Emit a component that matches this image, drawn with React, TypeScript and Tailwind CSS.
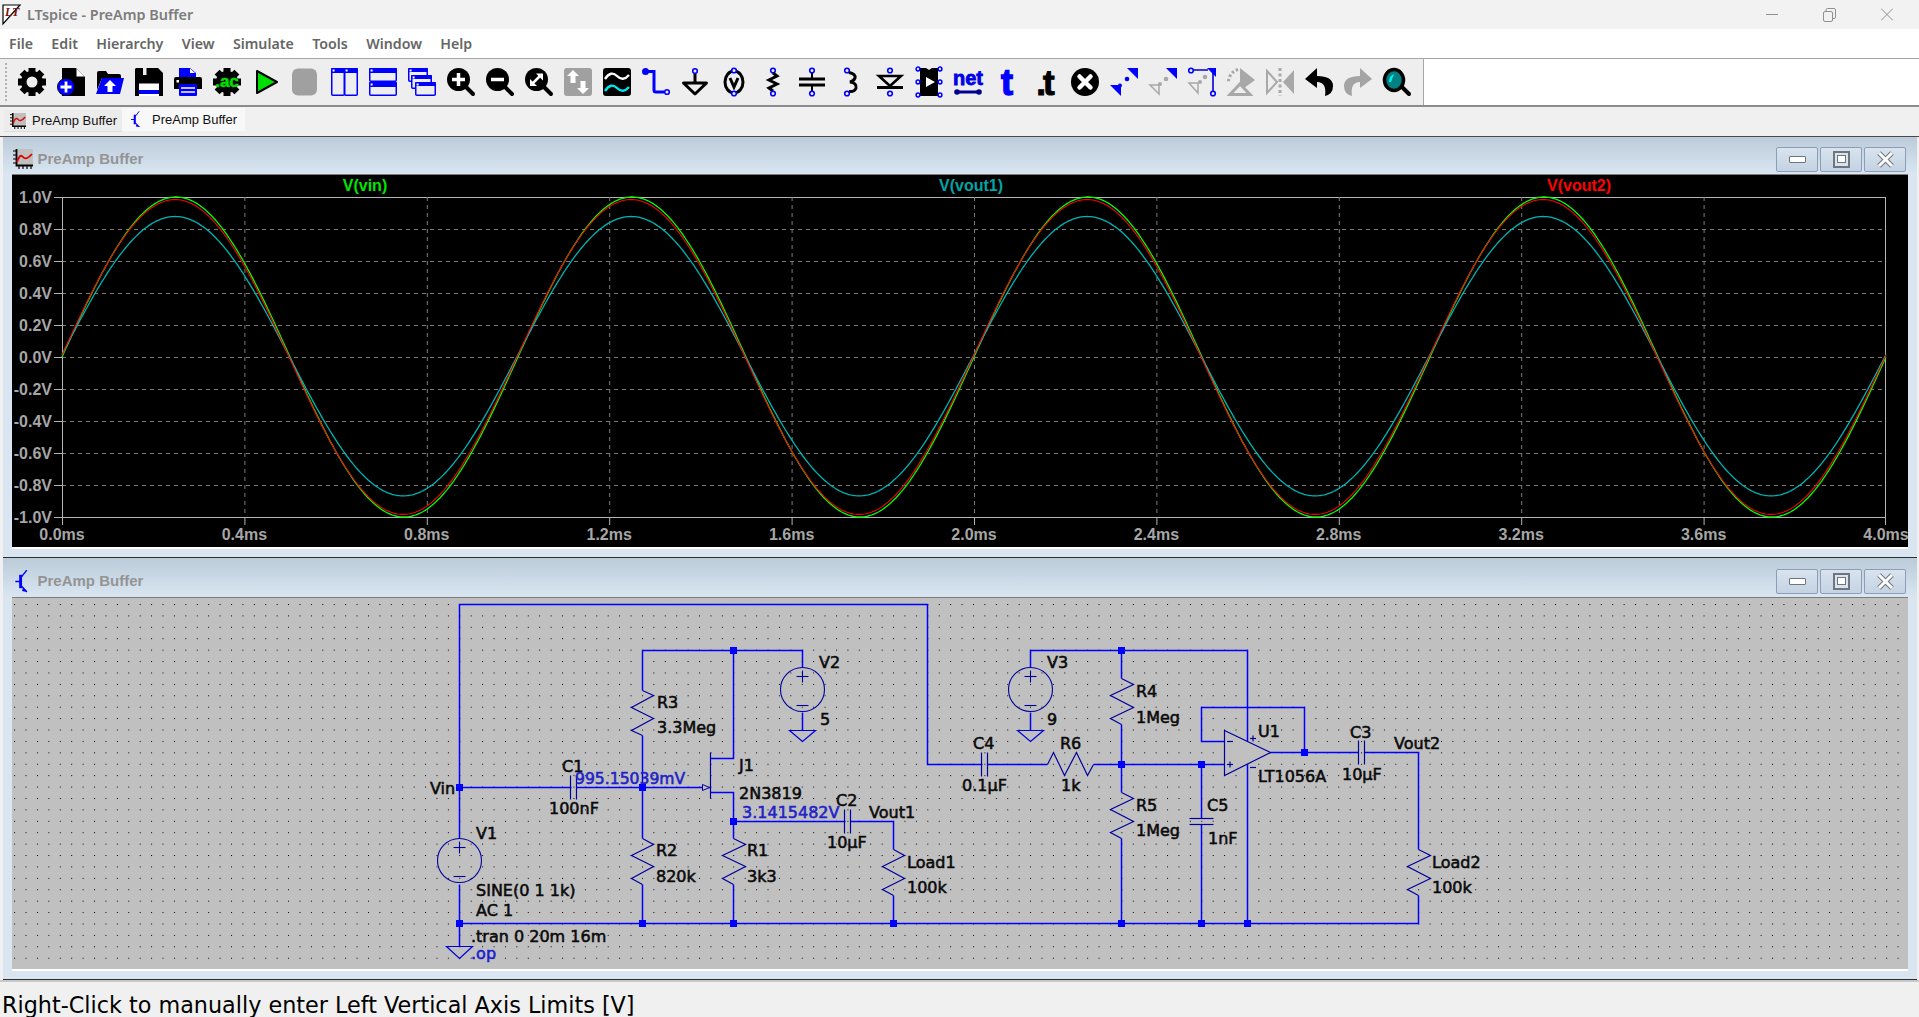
import type { ReactNode } from 'react'

const menus = ['File', 'Edit', 'Hierarchy', 'View', 'Simulate', 'Tools', 'Window', 'Help']

// schematic grid, one step is 16 LTspice units on screen
const gx = (n: number) => Math.round(459.3 + 11.415 * n) + 0.5
const gy = (n: number) => Math.round(604 + 11.41 * n) + 0.5
const px = (p: number[][]) => p.map(([c, r]) => `${gx(c)},${gy(r)}`).join(' ')

const wires = [
  [[0, 16], [9.75, 16]],
  [[10.25, 16], [22, 16]],
  [[0, 20.5], [0, 0], [41, 0], [41, 14], [45.75, 14]],
  [[46.25, 14], [51.5, 14]],
  [[55.5, 14], [67, 14]],
  [[16, 4], [16, 7.5]],
  [[16, 11.5], [16, 20.5]],
  [[16, 24.5], [16, 28]],
  [[16, 4], [30, 4], [30, 5.5]],
  [[24, 4], [24, 13.5], [22, 13.5]],
  [[22, 16.5], [24, 16.5], [24, 20.5]],
  [[24, 24.5], [24, 28]],
  [[24, 19], [33.75, 19]],
  [[34.25, 19], [38, 19], [38, 21.5]],
  [[38, 25.5], [38, 28]],
  [[0, 24.5], [0, 30]],
  [[0, 28], [84, 28], [84, 25.5]],
  [[84, 21.5], [84, 13], [79.25, 13]],
  [[78.75, 13], [71, 13]],
  [[30, 9.5], [30, 11]],
  [[50, 9.5], [50, 11]],
  [[50, 5.5], [50, 4], [69, 4], [69, 12]],
  [[69, 14], [69, 28]],
  [[58, 4], [58, 6.5]],
  [[58, 10.5], [58, 16.5]],
  [[58, 20.5], [58, 28]],
  [[65, 14], [65, 18.75]],
  [[65, 19.25], [65, 28]],
  [[67, 12], [65, 12], [65, 9], [74, 9], [74, 13]],
]

const nodes = [
  [0, 16], [16, 16], [24, 4], [24, 19], [0, 28], [16, 28], [24, 28], [38, 28],
  [58, 28], [65, 28], [69, 28], [58, 4], [58, 14], [65, 14], [74, 13],
]

const resistors = [
  [16, 7.5], [16, 20.5], [24, 20.5], [38, 21.5], [84, 21.5], [58, 6.5], [58, 16.5],
]

const sources = [
  [30, 7.47], [50, 7.47], [0, 22.47],
]

const grounds = [
  [30, 11], [50, 11], [0, 30],
]

// x, baseline, text
const labels: [number, number, string][] = [
  [819, 668, 'V2'], [820, 725, '5'], [657, 708, 'R3'], [657, 733, '3.3Meg'], [739, 771, 'J1'],
  [562, 772, 'C1'], [430, 794, 'Vin'], [549, 814, '100nF'], [739, 799, '2N3819'], [836, 806, 'C2'],
  [869, 818, 'Vout1'], [827, 848, '10µF'], [476, 839, 'V1'], [656, 856, 'R2'], [656, 882, '820k'],
  [747, 856, 'R1'], [747, 882, '3k3'], [907, 868, 'Load1'], [907, 893, '100k'],
  [476, 896, 'SINE(0 1 1k)'], [476, 916, 'AC 1'], [471, 942, '.tran 0 20m 16m'],
  [1047, 668, 'V3'], [1047, 725, '9'], [1136, 697, 'R4'], [1136, 723, '1Meg'], [1258, 737, 'U1'],
  [973, 749, 'C4'], [1060, 749, 'R6'], [1350, 738, 'C3'], [1394, 749, 'Vout2'], [962, 791, '0.1µF'],
  [1061, 791, '1k'], [1258, 782, 'LT1056A'], [1342, 780, '10µF'], [1136, 811, 'R5'], [1207, 811, 'C5'],
  [1136, 836, '1Meg'], [1208, 844, '1nF'], [1432, 868, 'Load2'], [1432, 893, '100k'],
]

const yTicks = [1, 0.8, 0.6, 0.4, 0.2, 0, -0.2, -0.4, -0.6, -0.8, -1]
const xTicks = [0, 0.4, 0.8, 1.2, 1.6, 2.0, 2.4, 2.8, 3.2, 3.6, 4.0]
const plotX = (t: number) => 62 + 456 * t
const plotY = (v: number) => 357 - 160 * v

function trace(amp: number, offset: number, phase: number) {
  const pts: string[] = []
  for (let i = 0; i <= 1000; i++) {
    const t = (i / 1000) * 4
    const v = offset + amp * Math.sin(2 * Math.PI * t + phase)
    pts.push(`${plotX(t).toFixed(1)},${plotY(v).toFixed(1)}`)
  }
  return pts.join(' ')
}

function Waveform() {
  return (
    <svg viewBox="12 175 1896 372" className="block w-[1896px] h-[372px] font-['Liberation_Sans',sans-serif] font-bold text-[16px]">
      <rect x="12" y="175" width="1896" height="372" fill="#000" />
      {yTicks.map((v) => (
        <g key={v}>
          <line x1="54" x2="62" y1={plotY(v) + 0.5} y2={plotY(v) + 0.5} stroke="#b4b4b4" />
          <line x1="62" x2="1885" y1={plotY(v) + 0.5} y2={plotY(v) + 0.5} stroke={Math.abs(v) === 1 ? '#b4b4b4' : '#7c7c7c'} strokeDasharray={Math.abs(v) === 1 ? undefined : '4 4'} />
          <text x="52" y={plotY(v) + 6} textAnchor="end" className="fill-[#a6a6a6]">{v < 0 ? '-' : ''}{Math.abs(v).toFixed(1)}V</text>
        </g>
      ))}
      {xTicks.map((t) => (
        <g key={t}>
          {(t === 0 || t === 4) && (
            <line y1="197" y2="517" x1={Math.min(plotX(t), 1885) + 0.5} x2={Math.min(plotX(t), 1885) + 0.5} stroke="#b4b4b4" />
          )}
          {t !== 0 && t !== 4 && (
            <line y1="197" y2="517" x1={plotX(t) + 0.5} x2={plotX(t) + 0.5} stroke="#7c7c7c" strokeDasharray="4 4" />
          )}
          <line y1="517" y2="525" x1={Math.min(plotX(t), 1885) + 0.5} x2={Math.min(plotX(t), 1885) + 0.5} stroke="#b4b4b4" />
          <text x={plotX(t)} y="540" textAnchor="middle" className="fill-[#a6a6a6]">{t.toFixed(1)}ms</text>
        </g>
      ))}
      <polyline points={trace(1, 0, 0)} fill="none" stroke="#00ff00" strokeWidth="1.3" />
      <polyline points={trace(0.873, 0.005, 0.012)} fill="none" stroke="#00b4b4" strokeWidth="1.3" />
      <polyline points={trace(0.984, 0, 0.012)} fill="none" stroke="#ff0000" strokeWidth="1.1" />
      <text x="365" y="191" textAnchor="middle" className="fill-[#00e600]">V(vin)</text>
      <text x="971" y="191" textAnchor="middle" className="fill-[#00a5a5]">V(vout1)</text>
      <text x="1579" y="191" textAnchor="middle" className="fill-[#ff0000]">V(vout2)</text>
    </svg>
  )
}

function Schematic() {
  const sym = '#00009c'
  return (
    <svg viewBox="12 598 1896 371" className="block w-[1896px] h-[371px] font-['DejaVu_Sans',sans-serif] text-[16px] [stroke-width:0.55px]">
      <defs>
        <pattern id="dots" x="459.3" y="604" width="11.415" height="11.41" patternUnits="userSpaceOnUse">
          <rect width="1" height="1" fill="#000" />
        </pattern>
      </defs>
      <rect x="12" y="598" width="1896" height="371" fill="#c0c0c0" />
      <rect x="12" y="598" width="1896" height="371" fill="url(#dots)" shapeRendering="crispEdges" />
      {wires.map((w, i) => (
        <polyline key={i} points={px(w)} fill="none" stroke="#0000ff" strokeWidth="1.5" />
      ))}
      {resistors.map(([c, r]) => (
        <polyline key={`${c}-${r}`} points={px([[c, r], [c + 1, r + 0.5], [c - 1, r + 1.5], [c + 1, r + 2.5], [c - 1, r + 3.5], [c, r + 4]])} fill="none" stroke={sym} strokeWidth="1.2" />
      ))}
      <polyline points={px([[51.5, 14], [52, 13], [53, 15], [54, 13], [55, 15], [55.5, 14]])} fill="none" stroke={sym} strokeWidth="1.2" />
      {sources.map(([c, r]) => (
        <g key={c} stroke={sym} strokeWidth="1.1" fill="none">
          <circle cx={gx(c)} cy={gy(r)} r="22" />
          <line x1={gx(c) - 6} x2={gx(c) + 6} y1={gy(r) - 13} y2={gy(r) - 13} />
          <line x1={gx(c)} x2={gx(c)} y1={gy(r) - 19} y2={gy(r) - 7} />
          <line x1={gx(c) - 6} x2={gx(c) + 6} y1={gy(r) + 16} y2={gy(r) + 16} />
        </g>
      ))}
      {grounds.map(([c, r]) => (
        <polygon key={c} points={`${gx(c) - 13},${gy(r)} ${gx(c) + 13},${gy(r)} ${gx(c)},${gy(r + 1)}`} fill="none" stroke="#0000d8" strokeWidth="1.2" />
      ))}
      {[[10, 16], [46, 14], [79, 13], [34, 19]].map(([c, r]) => (
        <g key={c} stroke={sym} strokeWidth="1.2">
          <line x1={gx(c) - 3} x2={gx(c) - 3} y1={gy(r) - 12} y2={gy(r) + 12} />
          <line x1={gx(c) + 3} x2={gx(c) + 3} y1={gy(r) - 12} y2={gy(r) + 12} />
        </g>
      ))}
      <g stroke={sym} strokeWidth="1.2">
        <line x1={gx(65) - 12} x2={gx(65) + 12} y1={gy(19) - 3} y2={gy(19) - 3} />
        <line x1={gx(65) - 12} x2={gx(65) + 12} y1={gy(19) + 3} y2={gy(19) + 3} />
        <line x1={gx(22)} x2={gx(22)} y1={gy(13)} y2={gy(17)} />
        <polygon points={`${gx(22) - 8},${gy(16) - 3} ${gx(22) - 1},${gy(16)} ${gx(22) - 8},${gy(16) + 3}`} fill="#c0c0c0" strokeWidth="1" />
        <polygon points={px([[67, 11], [71, 13], [67, 15]])} fill="#c0c0c0" />
        <line x1="1227" x2="1233" y1="741.5" y2="741.5" />
        <line x1="1227" x2="1233" y1="764.5" y2="764.5" />
        <line x1="1230" x2="1230" y1="761.5" y2="767.5" />
        <line x1="1250" x2="1256" y1="738.5" y2="738.5" />
        <line x1="1253" x2="1253" y1="735.5" y2="741.5" />
        <line x1="1250" x2="1256" y1="767.5" y2="767.5" />
      </g>
      {nodes.map(([c, r]) => (
        <rect key={`${c}-${r}`} x={gx(c) - 3.5} y={gy(r) - 3.5} width="7" height="7" fill="#0000ff" />
      ))}
      {labels.map(([x, y, t]) => (
        <text key={`${x}-${y}`} x={x} y={y} className="fill-[#0a0a0a] stroke-[#0a0a0a]">{t}</text>
      ))}
      <text x="575" y="784" className="fill-[#2222c8] stroke-[#2222c8] text-[15.6px]">995.15039mV</text>
      <text x="742" y="818" className="fill-[#2222c8] stroke-[#2222c8] text-[16px]">3.1415482V</text>
      <text x="471" y="959" className="fill-[#1c1cd0] stroke-[#1c1cd0]">.op</text>
    </svg>
  )
}

function Gear({ hole }: { hole?: boolean }) {
  const teeth = [0, 45, 90, 135, 180, 225, 270, 315]
  return (
    <g>
      {teeth.map((a) => (
        <rect key={a} x="10.5" y="0" width="7" height="6" fill="#000" transform={`rotate(${a} 14 14)`} />
      ))}
      <circle cx="14" cy="14" r="11" fill="#000" />
      {hole && <circle cx="14" cy="14" r="5.5" fill="#eeeeee" />}
    </g>
  )
}

const pin = (x: number, y: number) => <circle cx={x} cy={y} r="2.3" fill="#eee" stroke="#0000ff" strokeWidth="1.6" />

function Win({ x, y, w, h, bar = 5 }: { x: number; y: number; w: number; h: number; bar?: number }) {
  return (
    <g>
      <rect x={x + 0.75} y={y + 0.75} width={w - 1.5} height={h - 1.5} rx="1" fill="#eee" stroke="#0000ff" strokeWidth="1.5" />
      <rect x={x} y={y} width={w} height={bar} rx="1" fill="#0000ff" />
      <rect x={x + 1.6} y={y + 1.5} width="2" height="2" fill="#fff" />
    </g>
  )
}

const toolIcons: ReactNode[] = [
  <Gear hole />,
  <g>
    <path d="M5 0H19L28 9V28H5Z" fill="#000" />
    <path d="M19.5 0.5L27.5 8.5H19.5Z" fill="#fff" />
    <circle cx="9" cy="19" r="8.6" fill="#0000ff" stroke="#000" strokeWidth="0.8" />
    <path d="M9 13.5V24.5M3.5 19H14.5" stroke="#fff" strokeWidth="2.8" />
  </g>,
  <g>
    <path d="M1 16V5Q1 3 3 3H10L12 6H23Q25 6 25 8V10H6L1 22Z" fill="#000" />
    <path d="M6 10H28L24 26H0Z" fill="#0000ff" />
    <path d="M14 12L20 18H16.5V24H11.5V18H8Z" fill="#fff" />
  </g>,
  <g>
    <path d="M1 0H23L28 5V28H0V1Z" fill="#000" />
    <rect x="8" y="0" width="3.5" height="7" fill="#eee" />
    <rect x="4" y="15.5" width="20" height="12.5" fill="#fff" />
    <rect x="4" y="22" width="20" height="4" fill="#0000ff" />
  </g>,
  <g>
    <path d="M5 0H16L22 5V10H5Z" fill="#0000ff" />
    <path d="M16 0.5L21 5H16Z" fill="#fff" />
    <path d="M2 9H26Q28 9 28 11V21H0V11Q0 9 2 9Z" fill="#000" />
    <rect x="5" y="16" width="18" height="12" rx="1" fill="#0000ff" />
    <path d="M7 20H21M7 24H21" stroke="#fff" strokeWidth="1.6" />
    <rect x="2.5" y="12" width="2.5" height="2.5" fill="#fff" />
  </g>,
  <g>
    <Gear />
    <text x="14" y="19" textAnchor="middle" fontSize="17" fontWeight="700" fill="#00e000" stroke="#00e000" strokeWidth="0.5" fontFamily="Liberation Sans">.ac</text>
  </g>,
  <path d="M5 3L25 14L5 25Z" fill="#00e000" stroke="#000" strokeWidth="2" strokeLinejoin="round" />,
  <rect x="1" y="0.5" width="25" height="27" rx="6" fill="#a0a0a0" />,
  <g>
    <Win x={1} y={0} w={14} h={28} />
    <Win x={14} y={0} w={14} h={28} />
  </g>,
  <g>
    <Win x={0} y={0} w={28} h={14} />
    <Win x={0} y={14} w={28} h={14} />
  </g>,
  <g>
    <Win x={0} y={0} w={20} h={14} bar={4} />
    <Win x={3} y={7} w={21} h={14} bar={4} />
    <Win x={7} y={14} w={21} h={14} bar={4} />
  </g>,
  <g>
    <path d="M19 19L26 26" stroke="#000" strokeWidth="4" strokeLinecap="round" />
    <circle cx="11.5" cy="11.5" r="11.5" fill="#000" />
    <path d="M11.5 5V18M5 11.5H18" stroke="#fff" strokeWidth="3.5" />
  </g>,
  <g>
    <path d="M19 19L26 26" stroke="#000" strokeWidth="4" strokeLinecap="round" />
    <circle cx="11.5" cy="11.5" r="11.5" fill="#000" />
    <path d="M5 11.5H18" stroke="#fff" strokeWidth="3.5" />
  </g>,
  <g>
    <path d="M19 19L26 26" stroke="#000" strokeWidth="4" strokeLinecap="round" />
    <circle cx="11.5" cy="11.5" r="11.5" fill="#000" />
    <path d="M8 15L15 8" stroke="#fff" strokeWidth="2.5" />
    <path d="M11 5.5H18V12.5ZM5 11L12 18H5Z" fill="#fff" />
  </g>,
  <g>
    <rect width="28" height="28" rx="3" fill="#a0a0a0" />
    <path d="M9 2L15 8H11.5V15H6.5V8H3Z" fill="#fff" />
    <path d="M19 26L25 20H21.5V13H16.5V20H13Z" fill="#fff" />
  </g>,
  <g>
    <rect width="28" height="28" rx="3" fill="#000" />
    <path d="M2 11Q8 2 14 8T26 7" fill="none" stroke="#fff" strokeWidth="2.4" />
    <path d="M2 23Q8 14 14 20T26 19" fill="none" stroke="#00e6f0" strokeWidth="2.4" />
  </g>,
  <g>
    <path d="M4 3.5H12V22Q12 24 14 24H22" fill="none" stroke="#0000ff" strokeWidth="3" />
    <circle cx="3.5" cy="3.5" r="3.5" fill="#0000ff" />
    {pin(25, 24)}
  </g>,
  <g>
    {pin(14, 3)}
    <path d="M14 6V15" stroke="#000" strokeWidth="3" />
    <path d="M2.5 15H25.5L14 26Z" fill="none" stroke="#000" strokeWidth="3" strokeLinejoin="round" />
  </g>,
  <g>
    <ellipse cx="14" cy="14" rx="9" ry="11" fill="none" stroke="#000" strokeWidth="3" />
    <path d="M10 10L14 19L18 10" fill="none" stroke="#000" strokeWidth="3" />
    {pin(14, 2.5)}
    {pin(14, 25.5)}
  </g>,
  <g>
    {pin(14, 2.5)}
    <path d="M14 5L18 8L10 12L18 16L10 20L14 23" fill="none" stroke="#000" strokeWidth="3" />
    {pin(14, 25.5)}
  </g>,
  <g>
    {pin(14, 2.5)}
    <path d="M14 5V10M14 18V23" stroke="#000" strokeWidth="2" />
    <path d="M1 11H27M1 17H27" stroke="#000" strokeWidth="3" />
    {pin(14, 25.5)}
  </g>,
  <g>
    {pin(10, 2.5)}
    <path d="M12 4.5Q19 6 18 10Q17 13 13 14Q20 15 19 20Q18 24 12 23.5" fill="none" stroke="#000" strokeWidth="3" />
    {pin(10, 25.5)}
  </g>,
  <g>
    {pin(14, 2.5)}
    <path d="M3 8H25L14 18Z" fill="none" stroke="#000" strokeWidth="2.6" />
    <path d="M1 19.5H27" stroke="#000" strokeWidth="3" />
    {pin(14, 25.5)}
  </g>,
  <g>
    <path d="M5 0H11L14 2L17 0H23V28H5Z" fill="#000" />
    <path d="M11 9L20 14L11 19Z" fill="#fff" />
    {[1, 14, 27].map((y) => (
      <g key={y}>
        <circle cx="3" cy={y} r="1.9" fill="#eee" stroke="#0000ff" strokeWidth="1.5" />
        <circle cx="25" cy={y} r="1.9" fill="#eee" stroke="#0000ff" strokeWidth="1.5" />
      </g>
    ))}
  </g>,
  <g>
    <text x="14" y="17" textAnchor="middle" fontSize="20" fontWeight="700" fill="#0000e6" stroke="#0000e6" strokeWidth="0.8" fontFamily="Liberation Sans">net</text>
    <path d="M3 24H25" stroke="#000090" strokeWidth="3" />
    <circle cx="3" cy="24" r="2.8" fill="#000090" />
    <circle cx="25" cy="24" r="2.8" fill="#000090" />
  </g>,
  <text x="14" y="27" textAnchor="middle" fontSize="36" fontWeight="700" fill="#0000ff" stroke="#0000ff" strokeWidth="1.4" fontFamily="Liberation Sans">t</text>,
  <text x="12" y="27" textAnchor="middle" fontSize="35" fontWeight="700" letterSpacing="-3" fill="#000" stroke="#000" strokeWidth="1" fontFamily="Liberation Sans">.t</text>,
  <g>
    <ellipse cx="14" cy="14" rx="14" ry="14" fill="#000" />
    <path d="M8.5 8.5L19.5 19.5M19.5 8.5L8.5 19.5" stroke="#fff" strokeWidth="4.5" strokeLinecap="round" />
  </g>,
  <g fill="#0000ff">
    <path d="M28 0V11L17 0Z" />
    <path d="M0 17H11V28Z" />
    <circle cx="17" cy="11" r="2.3" />
    <circle cx="10" cy="17.5" r="2" />
  </g>,
  <g>
    <path d="M28 0V11L17 0Z" fill="#0000ff" />
    <path d="M1 17H10V26Z" fill="none" stroke="#a8a8a8" strokeWidth="1.5" />
    <circle cx="17" cy="11" r="2.3" fill="#a8a8a8" />
    <circle cx="11" cy="16" r="2" fill="#a8a8a8" />
  </g>,
  <g>
    <path d="M28 0V9L19 0Z" fill="#0000ff" />
    <path d="M5 2H20M25 5V25" stroke="#0000d8" strokeWidth="1.6" />
    {pin(3, 2.5)}
    {pin(25, 25.5)}
    <path d="M1 15H10V25Z" fill="none" stroke="#a8a8a8" strokeWidth="1.5" />
    <circle cx="17" cy="9" r="2.3" fill="#a8a8a8" />
    <circle cx="12" cy="14" r="2" fill="#a8a8a8" />
  </g>,
  <g>
    <path d="M13 0L28 12L13 23Z" fill="#a8a8a8" />
    <path d="M3 26.5H23L13 16Z" fill="#eee" stroke="#a8a8a8" strokeWidth="3" />
    <path d="M11 1.5A13 13 0 0 0 1.5 14" fill="none" stroke="#a8a8a8" strokeWidth="3" strokeDasharray="2.5 2" />
  </g>,
  <g>
    <path d="M1 3L11 14L1 25Z" fill="none" stroke="#a8a8a8" strokeWidth="2" />
    <path d="M28 2V26L17 14Z" fill="#a8a8a8" />
    <path d="M14 0V28" stroke="#a8a8a8" strokeWidth="3" strokeDasharray="3 2.5" />
  </g>,
  <path d="M12 0L0 11L12 20V14Q22 14 20 28Q28 26 28 18Q28 8 12 8Z" fill="#000" />,
  <path d="M16 0L28 11L16 20V14Q6 14 8 28Q0 26 0 18Q0 8 16 8Z" fill="#a4a4a4" />,
  <g>
    <path d="M19 19L26 26" stroke="#000" strokeWidth="4" strokeLinecap="round" />
    <ellipse cx="11" cy="12" rx="9.5" ry="10.5" fill="#008080" stroke="#000" strokeWidth="3.5" />
    <path d="M6 14Q6 8 11 6L8 14Z" fill="#00f0f0" />
  </g>,
]

function WindowButtons() {
  const cls = 'flex items-center justify-center w-[42px] h-[25px] rounded-[2px] border border-[#8d9cb8] bg-gradient-to-b from-[#d8e3ee] to-[#c4d2e2]'
  return (
    <div className="flex gap-[2px]">
      <div className={cls}>
        <div className="w-[17px] h-[7px] rounded-[1px] bg-white border border-[#6e7480]" />
      </div>
      <div className={cls}>
        <div className="w-[17px] h-[17px] border-[2px] border-[#6e7480] bg-[#d8e3ee] flex items-center justify-center">
          <div className="w-[9px] h-[8px] border border-[#6e7480] bg-white" />
        </div>
      </div>
      <div className={cls}>
        <svg width="19" height="19" viewBox="0 0 19 19">
          <path d="M3 3L16 16M16 3L3 16" stroke="#6e7480" strokeWidth="5" />
          <path d="M3 3L16 16M16 3L3 16" stroke="#fff" strokeWidth="3" />
        </svg>
      </div>
    </div>
  )
}

function WaveIcon({ className }: { className: string }) {
  return (
    <svg viewBox="0 0 20 20" className={className}>
      <rect x="3" y="0" width="17" height="17" fill="#c0c0c0" />
      <path d="M3.5 0V16.5H20" fill="none" stroke="#000" strokeWidth="1.8" />
      <path d="M0 2H3M0 6H3M0 10H3M0 14H3M6 17V20M10 17V20M14 17V20M18 17V20" stroke="#000" strokeWidth="1.2" />
      <path d="M4 13Q7 4 10 8T19 5" fill="none" stroke="#e00000" strokeWidth="1.8" />
    </svg>
  )
}

function BjtIcon({ className }: { className: string }) {
  return (
    <svg viewBox="0 0 16 24" className={className}>
      <path d="M0 12H5M12 0L5 9M5 15L12 23" fill="none" stroke="#0000ff" strokeWidth="1.4" />
      <path d="M5.5 5V19" stroke="#0000ff" strokeWidth="3" />
      <path d="M8 18L13 23L7 22Z" fill="#0000ff" />
    </svg>
  )
}

function MdiWindow({ icon, titleHeight, bodyHeight, children }: { icon: ReactNode; titleHeight: string; bodyHeight: string; children: ReactNode }) {
  return (
    <div className="flex flex-col ml-[3px] mr-[2px] rounded-tl-[4px] rounded-tr-[4px] bg-[#d9e6f2] border-b border-[#2e2e2e]">
      <div className={`flex items-center pt-[7px] pl-[10px] pr-[11px] bg-gradient-to-b from-[#bccbd9] to-[#d9e6f2] ${titleHeight}`}>
        <div className="flex justify-center w-[20px]">{icon}</div>
        <span className="ml-[4.5px] font-['Liberation_Sans',sans-serif] font-bold text-[15px] text-[#949494]">PreAmp Buffer</span>
        <div className="ml-auto">
          <WindowButtons />
        </div>
      </div>
      <div className={`mx-[9px] border-t border-[#7c7c7c] border-b-2 border-b-white overflow-hidden ${bodyHeight}`}>
        {children}
      </div>
      <div className="h-[8px]" />
    </div>
  )
}

export default function App() {
  return (
    <div className="flex flex-col w-[1919px] h-[1017px] overflow-hidden bg-[#f0f0f0] font-['Noto_Sans',sans-serif]">
      <div className="flex items-center h-[29px] shrink-0 bg-[#f2f2f2]">
        <svg viewBox="0 0 20 22" className="ml-[2px] w-[20px] h-[22px]">
          <path d="M1 1H18L1 20Z" fill="#fff" stroke="#000" strokeWidth="1.2" />
          <text x="3" y="12" fontSize="12" fontWeight="700" fontStyle="italic" fill="#7a1010" fontFamily="Liberation Serif">LT</text>
        </svg>
        <span className="ml-[5px] text-[14.4px] font-semibold text-[#7c7c7c]">LTspice - PreAmp Buffer</span>
        <div className="ml-auto flex items-center gap-[45px] pr-[26px]">
          <div className="w-[12px] h-px bg-[#909090]" />
          <svg width="13" height="14" viewBox="0 0 13 14" fill="none" stroke="#909090">
            <rect x="0.5" y="3.5" width="9" height="10" rx="1.5" />
            <path d="M3 3V2Q3 0.5 4.5 0.5H11Q12.5 0.5 12.5 2V9Q12.5 10.5 11 10.5H10" />
          </svg>
          <svg width="12" height="13" viewBox="0 0 12 13" stroke="#909090">
            <path d="M0 0.5L12 12.5M12 0.5L0 12.5" />
          </svg>
        </div>
      </div>
      <div className="flex items-center gap-[18.4px] h-[30px] shrink-0 pl-[9px] bg-white border-b border-[#a6a6a6] text-[14.2px] font-semibold text-[#666666]">
        {menus.map((m) => (
          <span key={m}>{m}</span>
        ))}
      </div>
      <div className="flex h-[48px] shrink-0 bg-white border-b-2 border-[#8c8c8c]">
        <div className="flex items-center w-[1424px] bg-[#eeeeee] border-r border-[#a8a8a8]">
          <div className="ml-[5px] mr-[5.5px] w-[2px] h-[38px] border-l-2 border-dotted border-[#b0b0b0]" />
          {toolIcons.map((icon, i) => (
            <div key={i} className="flex items-center justify-center w-[39px] h-[28px]">
              <svg viewBox="0 0 28 28" className="w-[28px] h-[28px] overflow-visible">{icon}</svg>
            </div>
          ))}
        </div>
      </div>
      <div className="flex items-start h-[30px] shrink-0 pl-[4px] pt-[1px] border-b border-[#4a4a4a] bg-[#f0f0f0]">
        <div className="flex items-center gap-[6px] w-[118px] h-[22px] mt-[2px] pl-[6px] bg-[#ececec] border-b border-[#dddddd] font-['Liberation_Sans',sans-serif] text-[13px] text-[#111111]">
          <WaveIcon className="w-[16px] h-[16px]" />
          <span>PreAmp Buffer</span>
        </div>
        <div className="flex items-center gap-[10px] w-[123px] h-[23px] pl-[9px] bg-[#f8f8f8] font-['Liberation_Sans',sans-serif] text-[13px] text-[#111111]">
          <BjtIcon className="w-[11px] h-[17px]" />
          <span>PreAmp Buffer</span>
        </div>
      </div>
      <MdiWindow icon={<WaveIcon className="w-[20px] h-[20px]" />} titleHeight="h-[37px]" bodyHeight="h-[375px]">
        <Waveform />
      </MdiWindow>
      <MdiWindow icon={<BjtIcon className="w-[16px] h-[23px]" />} titleHeight="h-[39px]" bodyHeight="h-[374px]">
        <Schematic />
      </MdiWindow>
      <div className="flex items-center flex-1 pl-[2px] pt-[7px] border-t-2 border-[#c8c8c8] font-['DejaVu_Sans',sans-serif] text-[22.3px] text-black">
        Right-Click to manually enter Left Vertical Axis Limits [V]
      </div>
    </div>
  )
}
